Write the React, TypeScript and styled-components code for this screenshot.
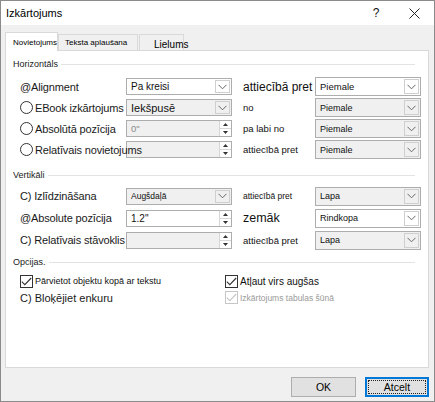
import styled, { createGlobalStyle } from "styled-components";

const GlobalStyle = createGlobalStyle`
  html, body {
    margin: 0;
    padding: 0;
    background: #fff;
  }
  body {
    width: 435px;
    height: 402px;
    overflow: hidden;
    font-family: "Liberation Sans", Arial, sans-serif;
    color: #1a1a1a;
  }
`;

const Window = styled.div`
  width: 435px;
  height: 402px;
  box-sizing: border-box;
  border: 1px solid #8a8a8a;
  background: #f0f0f0;
  display: flex;
  flex-direction: column;
`;

const TitleBar = styled.div`
  height: 24px;
  flex: none;
  background: #fff;
  display: flex;
  align-items: center;
  padding-left: 5px;
`;

const Title = styled.span`
  font-size: 11px;
  color: #000;
`;

const TitleActions = styled.div`
  margin-left: auto;
  display: flex;
  gap: 8px;
  padding-right: 5px;
`;

const TitleButton = styled.div`
  width: 30px;
  height: 20px;
  display: flex;
  align-items: center;
  justify-content: center;
  font-size: 12px;
  color: #111;
`;

const Body = styled.div`
  flex: 1;
  padding: 7px 5px 0 4px;
  display: flex;
  flex-direction: column;
`;

const TabStrip = styled.div`
  display: flex;
  align-items: flex-end;
  height: 18px;
`;

const Tab = styled.div<{ $active?: boolean; $w: number; $size: number; $pad: number }>`
  position: relative;
  z-index: ${({ $active }) => ($active ? 2 : 1)};
  box-sizing: border-box;
  width: ${({ $w }) => $w}px;
  height: ${({ $active }) => ($active ? 19 : 17)}px;
  margin-bottom: -1px;
  margin-right: ${({ $active }) => ($active ? 0 : 1)}px;
  padding-left: ${({ $pad }) => $pad}px;
  border: 1px solid #d9d9d9;
  border-bottom: ${({ $active }) => ($active ? "none" : "1px solid #d9d9d9")};
  background: ${({ $active }) => ($active ? "#fff" : "#f0f0f0")};
  font-size: ${({ $size }) => $size}px;
  color: #000;
  display: flex;
  align-items: ${({ $size }) => ($size > 9 ? "flex-end" : "center")};
  white-space: nowrap;
`;

const Panel = styled.div`
  position: relative;
  z-index: 1;
  box-sizing: border-box;
  height: 318px;
  flex: none;
  border: 1px solid #d9d9d9;
  background: #fff;
  padding: 7px 13px 0 7px;
`;

const GroupHeader = styled.div<{ $mt?: number }>`
  height: 12px;
  margin-top: ${({ $mt }) => $mt ?? 0}px;
  display: flex;
  align-items: center;
  font-size: 9px;
  color: #1a1a1a;

  &::after {
    content: "";
    flex: 1;
    height: 1px;
    margin-left: 3px;
    background: #e3e3e3;
  }
`;

const FieldGrid = styled.div<{ $row: number; $mt: number }>`
  margin-left: 7px;
  margin-top: ${({ $mt }) => $mt}px;
  display: grid;
  grid-template-columns: 106px 106px 83px 106px;
  grid-auto-rows: ${({ $row }) => $row}px;
  align-items: center;
`;

const Label = styled.div`
  position: relative;
  z-index: 2;
  display: flex;
  align-items: center;
  gap: 2px;
  font-size: 11px;
  letter-spacing: -0.15px;
  white-space: nowrap;
  width: 106px;
  overflow: visible;
`;

const Radio = styled.span`
  width: 13px;
  height: 13px;
  box-sizing: border-box;
  border: 1px solid #333;
  border-radius: 50%;
  background: #fff;
  flex: none;
`;

const Control = styled.div<{ $gray?: boolean; $h: number }>`
  box-sizing: border-box;
  height: ${({ $h }) => $h}px;
  border: 1px solid #adadad;
  background: ${({ $gray }) => ($gray ? "#f0f0f0" : "#fff")};
  display: flex;
  align-items: stretch;
`;

const Value = styled.div<{ $size: number; $muted?: boolean }>`
  flex: 1;
  padding-left: 4px;
  display: flex;
  align-items: center;
  font-size: ${({ $size }) => $size}px;
  color: ${({ $muted }) => ($muted ? "#8a8a8a" : "#111")};
  white-space: nowrap;
  overflow: hidden;
`;

const ArrowBox = styled.div`
  width: 15px;
  margin: 1px;
  box-sizing: border-box;
  border: 1px solid #cfcfcf;
  display: flex;
  align-items: center;
  justify-content: center;
`;

const Spin = styled.div`
  width: 11px;
  display: flex;
  flex-direction: column;
  border-left: 1px solid #d6d6d6;
  background: #fff;
`;

const SpinHalf = styled.div<{ $down?: boolean }>`
  flex: 1;
  display: flex;
  align-items: center;
  justify-content: center;
  border-top: ${({ $down }) => ($down ? "1px solid #d6d6d6" : "none")};
`;

const MidLabel = styled.div<{ $size: number }>`
  padding-left: 11px;
  font-size: ${({ $size }) => $size}px;
  white-space: nowrap;
  color: #111;
`;

const Options = styled.div`
  margin-left: 7px;
  margin-top: 6px;
  display: grid;
  grid-template-columns: 205px 1fr;
  grid-template-rows: 14px 19px;
  align-items: center;
`;

const CheckRow = styled.div<{ $muted?: boolean; $size: number }>`
  display: flex;
  align-items: center;
  gap: 2px;
  font-size: ${({ $size }) => $size}px;
  color: ${({ $muted }) => ($muted ? "#9a9a9a" : "#111")};
  white-space: nowrap;
`;

const Box = styled.span<{ $muted?: boolean }>`
  width: 13px;
  height: 13px;
  box-sizing: border-box;
  border: 1px solid ${({ $muted }) => ($muted ? "#c6c6c6" : "#333")};
  background: #fff;
  display: flex;
  align-items: center;
  justify-content: center;
  flex: none;
`;

const PlainOption = styled.div`
  font-size: 11px;
  white-space: nowrap;
`;

const Footer = styled.div`
  display: flex;
  justify-content: flex-end;
  gap: 9px;
  padding: 9px 0 0 0;
`;

const Button = styled.div<{ $focused?: boolean; $w: number }>`
  box-sizing: border-box;
  width: ${({ $w }) => $w}px;
  height: 20px;
  border: 1px solid ${({ $focused }) => ($focused ? "#0078d7" : "#adadad")};
  box-shadow: ${({ $focused }) => ($focused ? "inset 0 0 0 1px #0078d7" : "none")};
  background: #e1e1e1;
  padding: ${({ $focused }) => ($focused ? "2px" : "0")};
  display: flex;
  font-size: 10.5px;
  color: #000;
`;

const ButtonFace = styled.span<{ $focused?: boolean }>`
  flex: 1;
  display: flex;
  align-items: center;
  justify-content: center;
  border: 1px dotted ${({ $focused }) => ($focused ? "#222" : "transparent")};
`;

const Chevron = () => (
  <svg width="9" height="6" viewBox="0 0 9 6">
    <polyline points="0.5,0.8 4.5,4.8 8.5,0.8" fill="none" stroke="#666" strokeWidth="1" />
  </svg>
);

const Triangle = ({ down }: { down?: boolean }) => (
  <svg width="5" height="3" viewBox="0 0 5 3">
    <polygon points={down ? "0,0 5,0 2.5,3" : "0,3 5,3 2.5,0"} fill="#333" />
  </svg>
);

const Check = ({ color }: { color: string }) => (
  <svg width="11" height="9" viewBox="0 0 11 9">
    <polyline points="0.8,4.6 3.8,7.6 10.2,1" fill="none" stroke={color} strokeWidth="1.1" />
  </svg>
);

type Ctrl = { kind: "select" | "spin"; value: string; gray?: boolean; size: number; muted?: boolean };

type Row = {
  label: string;
  radio?: boolean;
  ctrl: Ctrl;
  mid: string;
  midSize: number;
  right: { value: string; gray?: boolean; size: number };
};

const horizontal: Row[] = [
  {
    label: "@Alignment",
    ctrl: { kind: "select", value: "Pa kreisi", size: 10 },
    mid: "attiecībā pret",
    midSize: 12,
    right: { value: "Piemale", size: 9.5 },
  },
  {
    label: "EBook izkārtojums",
    radio: true,
    ctrl: { kind: "select", value: "Iekšpusē", gray: true, size: 11 },
    mid: "no",
    midSize: 9.5,
    right: { value: "Piemale", gray: true, size: 9 },
  },
  {
    label: "Absolūtā pozīcija",
    radio: true,
    ctrl: { kind: "spin", value: '0"', gray: true, size: 9.5, muted: true },
    mid: "pa labi no",
    midSize: 9.5,
    right: { value: "Piemale", gray: true, size: 9 },
  },
  {
    label: "Relatīvais novietojums",
    radio: true,
    ctrl: { kind: "spin", value: "", gray: true, size: 9.5 },
    mid: "attiecībā pret",
    midSize: 9.5,
    right: { value: "Piemale", gray: true, size: 9 },
  },
];

const vertical: Row[] = [
  {
    label: "C) Izlīdzināšana",
    ctrl: { kind: "select", value: "Augšdaļā", gray: true, size: 8.5 },
    mid: "attiecībā pret",
    midSize: 8.5,
    right: { value: "Lapa", gray: true, size: 9 },
  },
  {
    label: "@Absolute pozīcija",
    ctrl: { kind: "spin", value: '1.2"', size: 10 },
    mid: "zemāk",
    midSize: 12.5,
    right: { value: "Rindkopa", size: 9 },
  },
  {
    label: "C) Relatīvais stāvoklis",
    ctrl: { kind: "spin", value: "", gray: true, size: 9.5 },
    mid: "attiecībā pret",
    midSize: 9.5,
    right: { value: "Lapa", gray: true, size: 9 },
  },
];

const LeftControl = ({ ctrl }: { ctrl: Ctrl }) => (
  <Control $gray={ctrl.gray} $h={17}>
    <Value $size={ctrl.size} $muted={ctrl.muted}>
      {ctrl.value}
    </Value>
    {ctrl.kind === "select" ? (
      <ArrowBox>
        <Chevron />
      </ArrowBox>
    ) : (
      <Spin>
        <SpinHalf>
          <Triangle />
        </SpinHalf>
        <SpinHalf $down>
          <Triangle down />
        </SpinHalf>
      </Spin>
    )}
  </Control>
);

const Fields = ({ rows, row, mt }: { rows: Row[]; row: number; mt: number }) => (
  <FieldGrid $row={row} $mt={mt}>
    {rows.map((r) => [
      <Label key={r.label + "-l"}>
        {r.radio && <Radio />}
        {r.label}
      </Label>,
      <LeftControl key={r.label + "-c"} ctrl={r.ctrl} />,
      <MidLabel key={r.label + "-m"} $size={r.midSize}>
        {r.mid}
      </MidLabel>,
      <Control key={r.label + "-r"} $gray={r.right.gray} $h={19}>
        <Value $size={r.right.size}>{r.right.value}</Value>
        <ArrowBox>
          <Chevron />
        </ArrowBox>
      </Control>,
    ])}
  </FieldGrid>
);

export default function App() {
  return (
    <>
      <GlobalStyle />
      <Window>
        <TitleBar>
          <Title>Izkārtojums</Title>
          <TitleActions>
            <TitleButton>?</TitleButton>
            <TitleButton>
              <svg width="11" height="11" viewBox="0 0 11 11">
                <path d="M0.5 0.5 L10.5 10.5 M10.5 0.5 L0.5 10.5" stroke="#222" strokeWidth="1" />
              </svg>
            </TitleButton>
          </TitleActions>
        </TitleBar>
        <Body>
          <TabStrip>
            <Tab $active $w={53} $size={8} $pad={7}>
              Novietojums
            </Tab>
            <Tab $w={80} $size={8} $pad={6}>
              Teksta aplaušana
            </Tab>
            <Tab $w={45} $size={10} $pad={14}>
              Lielums
            </Tab>
          </TabStrip>
          <Panel>
            <GroupHeader>Horizontāls</GroupHeader>
            <Fields rows={horizontal} row={21} mt={6} />
            <GroupHeader $mt={9}>Vertikāli</GroupHeader>
            <Fields rows={vertical} row={22} mt={4} />
            <GroupHeader $mt={5}>Opcijas.</GroupHeader>
            <Options>
              <CheckRow $size={9}>
                <Box>
                  <Check color="#333" />
                </Box>
                Pārvietot objektu kopā ar tekstu
              </CheckRow>
              <CheckRow $size={10}>
                <Box>
                  <Check color="#333" />
                </Box>
                Atļaut virs augšas
              </CheckRow>
              <PlainOption>C) Bloķējiet enkuru</PlainOption>
              <CheckRow $size={8.5} $muted>
                <Box $muted>
                  <Check color="#c6c6c6" />
                </Box>
                Izkārtojums tabulas šūnā
              </CheckRow>
            </Options>
          </Panel>
          <Footer>
            <Button $w={65}>
              <ButtonFace>OK</ButtonFace>
            </Button>
            <Button $w={64} $focused>
              <ButtonFace $focused>Atcelt</ButtonFace>
            </Button>
          </Footer>
        </Body>
      </Window>
    </>
  );
}
